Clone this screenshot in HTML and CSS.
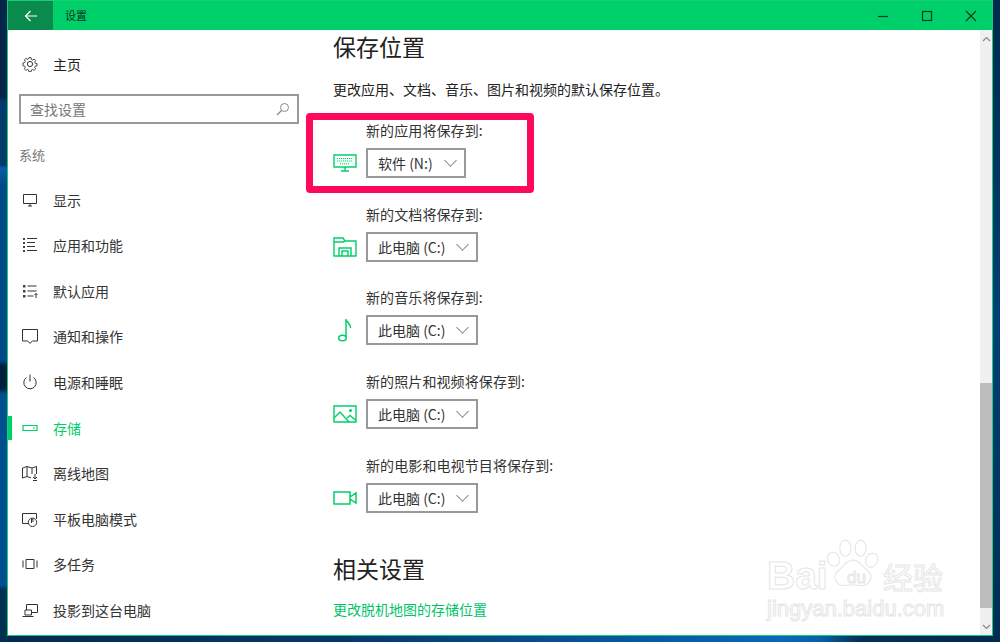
FILE: index.html
```html
<!DOCTYPE html>
<html lang="zh">
<head>
<meta charset="utf-8">
<title>设置</title>
<link rel="stylesheet" href="styles.css">
</head>
<body>
<div class="window">
  <header class="titlebar">
    <div class="back"><svg width="16" height="16" viewBox="0 0 16 16"><path d="M14 8H2.500M7.500 3 2.500 8l5 5" fill="none" stroke="#fff" stroke-width="1.200"/></svg></div>
    <div class="title">设置</div>
    <div class="controls">
      <svg width="16" height="16" viewBox="0 0 16 16"><path d="M3 8.500h10" stroke="#0b3a26" stroke-width="1.200"/></svg>
      <svg width="16" height="16" viewBox="0 0 16 16"><rect x="3.500" y="3.500" width="9" height="9" fill="none" stroke="#0b3a26" stroke-width="1.200"/></svg>
      <svg width="16" height="16" viewBox="0 0 16 16"><path d="M3 3l10 10M13 3 3 13" stroke="#0b3a26" stroke-width="1.200"/></svg>
    </div>
  </header>
  <div class="body">
    <nav class="sidebar">
      <div class="home"><svg class="ico" viewBox="0 0 16 16"><circle cx="8" cy="8" r="2.600" fill="none" stroke="#333" stroke-width="1"/><path d="M6.800 1h2.400l.4 2 1.300.6 1.700-1.100 1.700 1.700-1.100 1.700.6 1.300 2 .4v2.400l-2 .4-.6 1.300 1.100 1.700-1.700 1.700-1.700-1.100-1.300.6-.4 2H6.800l-.4-2-1.300-.6-1.700 1.100-1.700-1.700 1.100-1.700-.6-1.300-2-.4V6.800l2-.4.6-1.300-1.100-1.700 1.700-1.700 1.700 1.100 1.300-.6z" transform="translate(.8 .8) scale(.9)" fill="none" stroke="#333" stroke-width="1"/></svg><span>主页</span></div>
      <div class="search"><span>查找设置</span><svg width="14" height="14" viewBox="0 0 14 14"><circle cx="8.500" cy="5.500" r="4" fill="none" stroke="#888"/><path d="M5.500 8.500 1 13" stroke="#888" stroke-width="1.200"/></svg></div>
      <div class="group">系统</div>
      <ul class="menu">
        <li><svg class="ico" viewBox="0 0 16 16"><path d="M1.500 2.500h13v9h-13zM6 14h4M8 11.500V14" fill="none" stroke="#333"/></svg>显示</li>
        <li><svg class="ico" viewBox="0 0 16 16"><path d="M1 1h2v2H1zM1 5h2v2H1zM1 9h2v2H1zM1 13h2v2H1z" fill="#444"/><path d="M5 1.500h10M5 5.500h8M5 9.500h8M5 13.500h10" stroke="#333"/></svg>应用和功能</li>
        <li><svg class="ico" viewBox="0 0 16 16"><path d="M1 2h2.500v2.500H1zM1 7h2.500v2.500H1zM1 12h2.500v2.500H1z" fill="#444"/><path d="M5.500 3h9M5.500 8h9M5.500 13h6" stroke="#333"/><path d="M14 15v-4.500M12.500 12l1.500-1.500 1.500 1.500" fill="none" stroke="#333"/></svg>默认应用</li>
        <li><svg class="ico" viewBox="0 0 16 16"><path d="M.5 1.500h15v11.500h-5L8 15.300 5.500 13h-5z" fill="none" stroke="#333"/></svg>通知和操作</li>
        <li><svg class="ico" viewBox="0 0 16 16"><path d="M4.500 3.500a6.200 6.200 0 1 0 7 0M8 .5v7" fill="none" stroke="#333"/></svg>电源和睡眠</li>
        <li class="active"><svg class="ico" viewBox="0 0 16 16"><path d="M1 5.500h14v5H1z" fill="none" stroke="#00d06a" stroke-width="1.200"/><path d="M11 8h2" stroke="#00d06a"/></svg>存储</li>
        <li><svg class="ico" viewBox="0 0 16 16"><path d="M.5 3 5 1.500l5 1.500 4.500-1.500V9M.5 3v10L5 11.500l4 1.300M5 1.500v10M10 3v6M13 9v5M11 12l2 2 2-2M11 15.500h4" fill="none" stroke="#333"/></svg>离线地图</li>
        <li><svg class="ico" viewBox="0 0 16 16"><path d="M7 12.500H.5v-10h14V8" fill="none" stroke="#333"/><circle cx="10.500" cy="11.300" r="4.200" fill="#fff" stroke="#333"/><path d="M9.500 12V8h1.500v3" fill="none" stroke="#333"/></svg>平板电脑模式</li>
        <li><svg class="ico" viewBox="0 0 16 16"><path d="M4 3.500h8v9H4zM1 4.500v7M15 4.500v7" fill="none" stroke="#333"/></svg>多任务</li>
        <li><svg class="ico" viewBox="0 0 16 16"><path d="M4.500 8V2.500h11v8H10M3 8h6.500v5H3zM.5 14.500h11" fill="none" stroke="#333"/></svg>投影到这台电脑</li>
      </ul>
    </nav>
    <main class="content">
      <h2 class="h-save">保存位置</h2>
      <p class="desc">更改应用、文档、音乐、图片和视频的默认保存位置。</p>
      <section class="row">
        <div class="label">新的应用将保存到:</div>
        <div class="pick">
          <svg class="big" viewBox="0 0 24 18"><path d="M1 1h22v12H1zM12 13v4M8 17h8" fill="none" stroke="#00d06a" stroke-width="1.400"/><path d="M4 4.500h16M4 7h16M7 9.800h10" stroke="#00d06a" stroke-dasharray="1.200 .8"/></svg>
          <div class="select"><span>软件 (N:)</span><i class="chev"></i></div>
        </div>
      </section>
      <section class="row">
        <div class="label">新的文档将保存到:</div>
        <div class="pick">
          <svg class="big" viewBox="0 0 24 20"><path d="M1 19V1h9l2 3h11v15zM1 5h9l2-1" fill="none" stroke="#00d06a" stroke-width="1.400"/><path d="M6 19v-8h12v8M9 19v-5h6v5" fill="none" stroke="#00d06a" stroke-width="1.400"/></svg>
          <div class="select"><span>此电脑 (C:)</span><i class="chev"></i></div>
        </div>
      </section>
      <section class="row">
        <div class="label">新的音乐将保存到:</div>
        <div class="pick">
          <svg class="big" viewBox="0 0 24 24"><ellipse cx="9.500" cy="20" rx="3.800" ry="2.800" fill="none" stroke="#00d06a" stroke-width="1.500"/><path d="M13 19V1c.5 3.500 5 4.500 4.500 9" fill="none" stroke="#00d06a" stroke-width="1.500"/></svg>
          <div class="select"><span>此电脑 (C:)</span><i class="chev"></i></div>
        </div>
      </section>
      <section class="row">
        <div class="label">新的照片和视频将保存到:</div>
        <div class="pick">
          <svg class="big" viewBox="0 0 24 18"><path d="M1 1h22v16H1z" fill="none" stroke="#00d06a" stroke-width="1.400"/><path d="M1 13l6-6 9 10M14 13l3-2.500 6 5" fill="none" stroke="#00d06a" stroke-width="1.400"/><circle cx="17.500" cy="5.500" r="1.500" fill="#00d06a"/></svg>
          <div class="select"><span>此电脑 (C:)</span><i class="chev"></i></div>
        </div>
      </section>
      <section class="row">
        <div class="label">新的电影和电视节目将保存到:</div>
        <div class="pick">
          <svg class="big" viewBox="0 0 24 14"><path d="M1 1h16v12H1zM17 6l6-4v10l-6-4" fill="none" stroke="#00d06a" stroke-width="1.500"/></svg>
          <div class="select"><span>此电脑 (C:)</span><i class="chev"></i></div>
        </div>
      </section>
      <h2 class="h-rel">相关设置</h2>
      <a class="link">更改脱机地图的存储位置</a>
    </main>
    <div class="scrollbar">
      <div class="arrow"><svg width="9" height="6" viewBox="0 0 9 6"><path d="M1 5l3.500-3.500L8 5" fill="none" stroke="#888" stroke-width="1.200"/></svg></div>
      <div class="track"><div class="thumb"></div></div>
      <div class="arrow"><svg width="9" height="6" viewBox="0 0 9 6"><path d="M1 1l3.500 3.500L8 1" fill="none" stroke="#888" stroke-width="1.200"/></svg></div>
    </div>
  </div>
</div>
<div class="highlight"></div>
<div class="watermark">
  <svg class="paw" viewBox="0 0 66 58"><g fill="#fff" stroke="#e6e6e6" stroke-width="1.300"><ellipse cx="10" cy="24" rx="7" ry="8.500" transform="rotate(-25 10 24)"/><ellipse cx="24" cy="11" rx="6.500" ry="9.500"/><ellipse cx="42" cy="11" rx="6.500" ry="9.500"/><ellipse cx="55" cy="25" rx="7" ry="8.500" transform="rotate(25 55 25)"/><path d="M33 25c8 0 10 7 17 12 8 7 3 19-8 18-5 0-6-1-9-1s-5 1-10 1c-11 0-15-11-7-18 7-5 9-12 17-12z"/></g></svg>
  <span class="wm-bai">Bai</span>
  <span class="wm-du">du</span>
  <span class="wm-cn">经验</span>
  <span class="wm-url">jingyan.baidu.com</span>
</div>
</body>
</html>
```
FILE: styles.css
```css
* { box-sizing: border-box; }
html, body { margin: 0; height: 642px; overflow: hidden; }
body {
  position: relative;
  padding: 0 7px 6px;
  font-family: "Noto Sans CJK SC", "Liberation Sans", sans-serif;
  font-size: 14px;
  color: #333;
  background-color: #03294e;
  background-image:
    linear-gradient(180deg, #04264b 0, #04264b 98px, #013a6b 100px, #013a6b 165px, #0a5ca8 168px, #004a88 185px, #004a88 360px, #021f3e 366px, #021f3e 388px, #00508f 394px, #00508f 585px, #023055 590px),
    linear-gradient(180deg, #03294e 0, #003f78 50%, #032c54 100%),
    linear-gradient(90deg, #042a50 0, #04396c 35%, #0a68b8 78%, #0a60a8 82%, #03305a 86%, #03294e 100%);
  background-repeat: no-repeat;
  background-size: 7px 100%, 7px 100%, 100% 6px;
  background-position: left top, right top, left bottom;
}
.window {
  height: 636px;
  display: flex;
  flex-direction: column;
  border: 1px solid #14cf78;
  background: #fff;
}
.titlebar {
  height: 29px;
  flex: none;
  display: flex;
  align-items: center;
  background: #00d06a;
}
.back {
  width: 45px;
  height: 29px;
  display: flex;
  align-items: center;
  justify-content: center;
  background: #0a8a4c;
}
.title { margin: -2px 0 0 12px; font-size: 11px; color: #10301f; }
.controls { margin-left: auto; display: flex; }
.controls svg { margin: 0 14px; }
.controls svg:last-child { margin-right: 13px; }
.body { flex: 1; display: flex; min-height: 0; }
.sidebar { width: 325px; flex: none; }
.ico { width: 16px; height: 16px; flex: none; }
.home {
  height: 46px;
  margin-top: 11px;
  padding-left: 14px;
  display: flex;
  align-items: center;
  gap: 15px;
  color: #222;
}
.search {
  margin: 7px 0 0 11px;
  width: 280px;
  height: 30px;
  border: 2px solid #999;
  padding: 0 7px 0 9px;
  display: flex;
  align-items: center;
  justify-content: space-between;
  color: #777;
}
.group { margin: 21px 0 0 11px; color: #777; font-size: 13px; line-height: 20px; }
.menu { list-style: none; margin: 12px 0 0; padding: 0; }
.menu li {
  height: 45.560px;
  padding-left: 14px;
  display: flex;
  align-items: center;
  gap: 15px;
  color: #333;
}
.menu li.active { position: relative; color: #00cf6a; }
.menu li.active::before {
  content: "";
  position: absolute;
  left: 0;
  top: 11px;
  width: 4px;
  height: 24px;
  background: #00d06a;
}
.content { flex: 1; }
h2 { margin: 0; font-weight: 400; font-size: 23px; line-height: 32px; color: #222; }
.desc { margin: 17px 0 0; line-height: 20px; color: #222; }
.row { height: 83.700px; }
.row:first-of-type { margin-top: 21px; }
.label { padding-left: 33px; line-height: 20px; color: #333; letter-spacing: .1px; }
.pick { margin-top: 8px; display: flex; align-items: center; gap: 9px; }
.big { width: 24px; height: 24px; flex: none; }
.select {
  height: 30px;
  border: 2px solid #999;
  padding: 0 7px 0 10px;
  display: inline-flex;
  align-items: center;
  gap: 11px;
  color: #333;
}
.chev {
  width: 9px;
  height: 9px;
  margin: -5px 2px 0;
  border-right: 1px solid #888;
  border-bottom: 1px solid #888;
  transform: rotate(45deg);
}
.h-rel { margin-top: 14px; }
.link { display: block; margin-top: 15px; line-height: 20px; color: #00c468; }
.scrollbar { width: 12px; flex: none; display: flex; flex-direction: column; background: #f0f0f0; }
.arrow { height: 17px; flex: none; display: flex; align-items: center; justify-content: center; }
.track { flex: 1; display: flex; flex-direction: column; justify-content: flex-end; padding-bottom: 10px; }
.thumb { height: 225px; background: #bdbdbd; }
.highlight {
  position: absolute;
  left: 306px;
  top: 113px;
  width: 228px;
  height: 80px;
  border: 7px solid #ff0a5a;
  border-radius: 4px;
}
.watermark { position: absolute; left: 767px; top: 530px; width: 190px; height: 100px; color: #fff; font-family: "Liberation Sans", sans-serif; }
.watermark span { position: absolute; -webkit-text-stroke: 1px #e6e6e6; white-space: nowrap; }
.paw { position: absolute; left: 58px; top: 5px; width: 56px; height: 57px; }
.wm-bai { left: 0; top: 26px; font-size: 39px; line-height: 40px; font-weight: 700; }
.wm-du { left: 80px; top: 38px; font-size: 17px; line-height: 20px; }
.wm-cn { left: 116px; top: 26px; font-size: 30px; line-height: 40px; font-family: "Noto Sans CJK SC", sans-serif; }
.wm-url { left: 0; top: 64px; font-size: 22px; line-height: 30px; }
```
